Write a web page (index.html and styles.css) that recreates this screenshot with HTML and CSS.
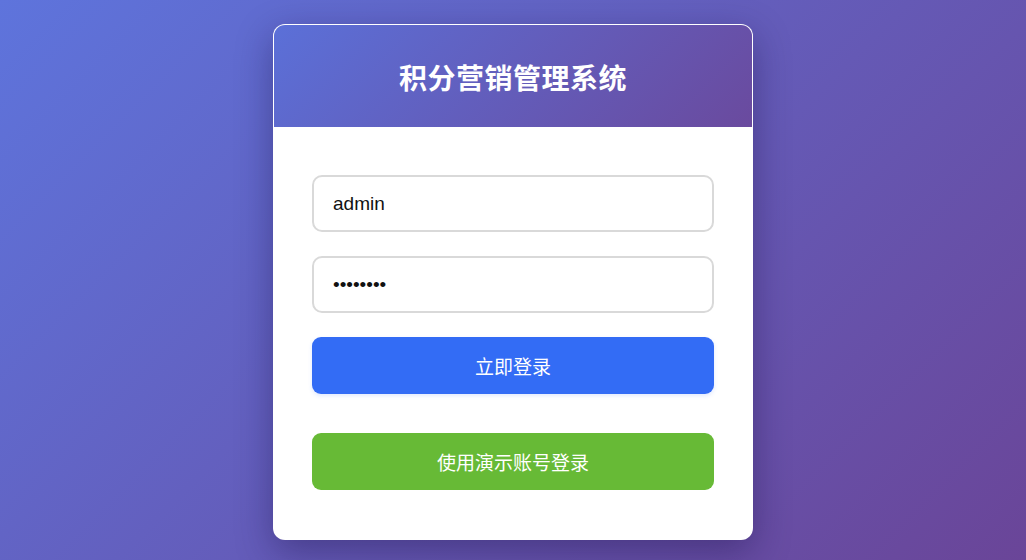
FILE: index.html
```html
<!DOCTYPE html>
<html lang="zh-CN">
<head>
<meta charset="utf-8">
<title>积分营销管理系统</title>
<link rel="stylesheet" href="styles.css">
</head>
<body>
<div class="page">
  <div class="card">
    <div class="card-header">
      <h1 class="title">积分营销管理系统</h1>
    </div>
    <form class="card-body">
      <input class="field" type="text" value="admin">
      <input class="field" type="password" value="admin123">
      <button type="button" class="btn btn-primary">立即登录</button>
      <button type="button" class="btn btn-demo">使用演示账号登录</button>
    </form>
  </div>
</div>
</body>
</html>
```
FILE: styles.css
```css
* { box-sizing: border-box; }
html, body { margin: 0; padding: 0; }
body {
  font-family: "Liberation Sans", "Noto Sans CJK SC", sans-serif;
  background: linear-gradient(135deg, #5e74dc 0%, #6a4598 100%);
  min-height: 100vh;
}
.page {
  min-height: 560px;
  display: flex;
  justify-content: center;
  padding-top: 24px;
}
.card {
  width: 480px;
  height: 516px;
  background: #fff;
  border: 1px solid rgba(255,255,255,0.75);
  border-radius: 12px;
  overflow: hidden;
  box-shadow: 0 12px 36px rgba(25, 15, 70, 0.4);
  display: flex;
  flex-direction: column;
}
.card-header {
  height: 102px;
  background: linear-gradient(135deg, #5b70d8 0%, #6a4a9e 100%);
  display: flex;
  align-items: center;
  justify-content: center;
}
.title {
  margin: 0;
  color: #fff;
  font-size: 28px;
  font-weight: 700;
  letter-spacing: 0.5px;
  padding-top: 2px;
}
.card-body {
  padding: 48px 38px 0;
  display: flex;
  flex-direction: column;
  margin: 0;
}
.field {
  height: 57px;
  width: 100%;
  border: 2px solid #d9d9d9;
  border-radius: 10px;
  padding: 0 19px;
  font-family: "Liberation Sans", "Noto Sans CJK SC", sans-serif;
  font-size: 19px;
  color: #111;
  background: #fff;
  outline: none;
  margin-bottom: 24px;
}
.btn {
  height: 57px;
  width: 100%;
  border: none;
  border-radius: 9px;
  color: #fff;
  font-family: "Liberation Sans", "Noto Sans CJK SC", sans-serif;
  font-size: 19px;
  cursor: pointer;
}
.btn-primary {
  background: #336cf5;
  box-shadow: 0 2px 4px rgba(51,108,245,0.15);
  margin-bottom: 39px;
}
.btn-demo {
  background: #67ba36;
}
```
